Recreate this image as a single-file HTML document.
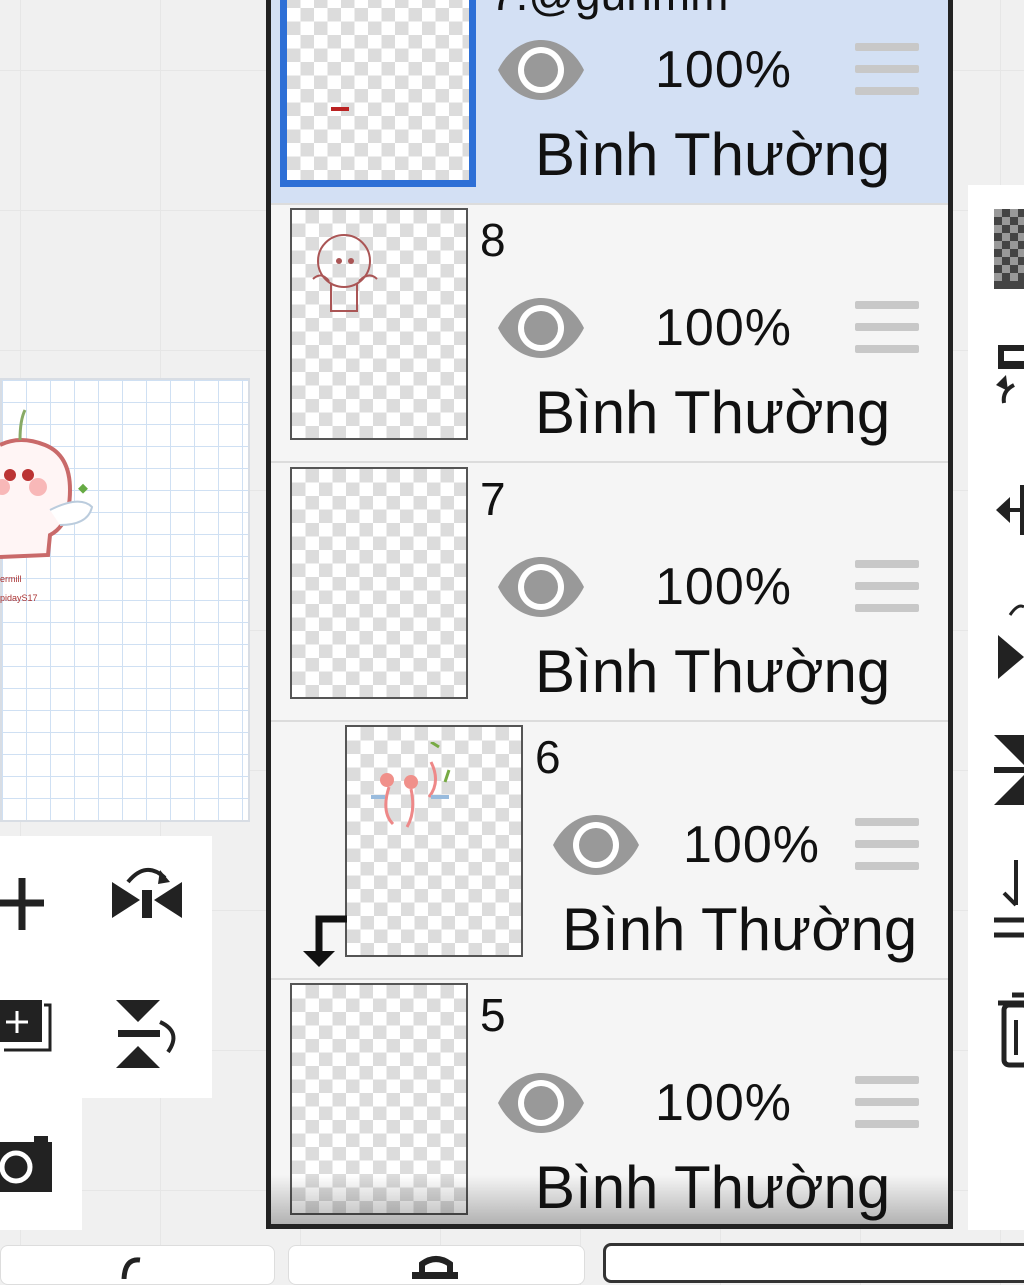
<!DOCTYPE html>
<html><head><meta charset="utf-8"><style>
*{margin:0;padding:0;box-sizing:border-box}
body{width:1024px;height:1279px;overflow:hidden;background:#f0f0f0;position:relative;font-family:"Liberation Sans","DejaVu Sans",sans-serif;
background-image:linear-gradient(#e6e6e6 1px,transparent 1px),linear-gradient(90deg,#e6e6e6 1px,transparent 1px);background-size:140px 140px;background-position:20px 70px}
.abs{position:absolute}
.panel{left:266px;top:-10px;width:687px;height:1239px;border:5px solid #222;background:#f5f5f5;overflow:hidden}
.row{position:absolute;left:0;width:677px;height:258px;border-bottom:2px solid #dcdcdc}
.chk{position:absolute;border:2px solid #555;background-color:#fff;
background-image:conic-gradient(#dcdcdc 25%,transparent 0 50%,#dcdcdc 0 75%,transparent 0);background-size:27px 27px}
.name{position:absolute;font-size:46px;color:#111}
.eye{position:absolute;width:90px;height:64px}
.pct{position:absolute;font-size:52px;color:#111;letter-spacing:1px}
.ham{position:absolute;width:64px}
.ham i{display:block;height:8px;background:#c8c8c8;margin-bottom:14px;border-radius:2px}
.mode{position:absolute;font-size:60px;color:#111}
</style></head><body>

<div class="abs" style="left:0;top:378px;width:250px;height:444px;background:#fff;border:2px solid #d8dde4;
background-image:linear-gradient(#cfe0f3 1px,transparent 1px),linear-gradient(90deg,#cfe0f3 1px,transparent 1px);background-size:24px 22px"></div>
<svg class="abs" style="left:0;top:395px" width="100" height="215">
<path d="M0 50 Q20 40 45 50 Q70 60 70 95 Q70 130 50 140 L48 160 L0 162" fill="#fff5f5" stroke="#c96a6a" stroke-width="4"/>
<circle cx="10" cy="80" r="6" fill="#b33"/><circle cx="28" cy="80" r="6" fill="#b33"/>
<circle cx="38" cy="92" r="9" fill="#f8b8b8"/><circle cx="2" cy="92" r="8" fill="#f8b8b8"/>
<path d="M50 115 Q80 100 92 112 Q88 130 60 130" fill="#fff" stroke="#bcd" stroke-width="2"/>
<path d="M20 45 Q20 25 25 15" stroke="#8a6" stroke-width="3" fill="none"/>
<rect x="80" y="90" width="7" height="7" fill="#6a4" transform="rotate(45 83 93)"/>
<text x="0" y="187" font-size="9" fill="#a33" font-family="Liberation Sans">ermill</text>
<text x="0" y="206" font-size="9" fill="#a33" font-family="Liberation Sans">pidayS17</text>
</svg>

<div class="abs" style="left:0;top:836px;width:212px;height:262px;background:#fff"></div>
<div class="abs" style="left:0;top:1098px;width:82px;height:132px;background:#fff"></div>
<svg class="abs" style="left:0;top:860px" width="212" height="370">
<path d="M22 18 V70 M0 43 H44" stroke="#222" stroke-width="7"/>
<path d="M112 22 L140 40 L112 58Z M182 22 L154 40 L182 58Z" fill="#222"/><rect x="142" y="30" width="10" height="28" fill="#222"/>
<path d="M128 22 Q146 0 165 18" stroke="#222" stroke-width="4" fill="none"/><path d="M160 10 L170 22 L158 24Z" fill="#222"/>
<rect x="0" y="140" width="42" height="42" fill="#222"/><path d="M44 145 H50 V190 H4" stroke="#222" stroke-width="3" fill="none"/>
<path d="M6 162 H28 M17 151 V173" stroke="#fff" stroke-width="3"/>
<path d="M116 140 H160 L138 162Z M116 208 H160 L138 186Z" fill="#222"/><rect x="118" y="170" width="42" height="7" fill="#222"/>
<path d="M160 162 Q182 172 168 192" stroke="#222" stroke-width="4" fill="none"/>
<rect x="0" y="282" width="52" height="50" fill="#222"/><rect x="34" y="276" width="14" height="8" fill="#222"/>
<circle cx="16" cy="307" r="14" fill="none" stroke="#fff" stroke-width="5"/>
</svg>

<div class="abs" style="left:968px;top:185px;width:56px;height:1045px;background:#fff"></div>
<svg class="abs" style="left:990px;top:205px" width="34" height="880">
<rect x="4" y="4" width="30" height="80" fill="#444"/>
<path d="M4 4h8v8H4zM20 4h8v8h-8zM12 12h8v8h-8zM28 12h6v8h-6zM4 20h8v8H4zM20 20h8v8h-8zM12 28h8v8h-8zM28 28h6v8h-6zM4 36h8v8H4zM20 36h8v8h-8zM12 44h8v8h-8zM28 44h6v8h-6zM4 52h8v8H4zM20 52h8v8h-8zM12 60h8v8h-8zM28 60h6v8h-6zM4 68h8v8H4zM20 68h8v8h-8z" fill="#999"/>
<rect x="8" y="140" width="26" height="24" fill="#222"/><rect x="14" y="146" width="20" height="10" fill="#fff"/>
<path d="M24 180 Q12 186 14 198" stroke="#222" stroke-width="4" fill="none"/><path d="M6 180 L16 170 L18 186Z" fill="#222"/>
<path d="M6 305 L20 292 V318Z" fill="#222"/><path d="M18 305 H34 M32 280 V330" stroke="#222" stroke-width="4"/>
<path d="M8 430 L34 452 L8 474Z" fill="#222"/><path d="M20 410 Q28 398 34 402" stroke="#222" stroke-width="3" fill="none"/>
<path d="M4 530 H34 V560Z M4 600 H34 V570Z" fill="#222"/><rect x="4" y="562" width="30" height="6" fill="#222"/>
<path d="M26 655 V700 M14 688 L26 700" stroke="#222" stroke-width="4"/><path d="M4 715 H34 M4 730 H34" stroke="#222" stroke-width="5"/>
<rect x="14" y="800" width="24" height="60" rx="5" fill="none" stroke="#222" stroke-width="5"/><path d="M8 798 H34 M22 790 H34" stroke="#222" stroke-width="5"/><path d="M26 815 V850" stroke="#222" stroke-width="4"/>
</svg>

<div class="abs" style="left:0;top:1245px;width:275px;height:40px;background:#fff;border:1px solid #ddd;border-radius:8px"></div>
<div class="abs" style="left:288px;top:1245px;width:297px;height:40px;background:#fff;border:1px solid #ddd;border-radius:8px"></div>
<div class="abs" style="left:603px;top:1243px;width:430px;height:40px;background:#fff;border:3px solid #333;border-radius:8px"></div>
<svg class="abs" style="left:110px;top:1250px" width="360" height="29">
<path d="M30 10 Q15 8 14 29" stroke="#222" stroke-width="5" fill="none"/>
<path d="M312 22 V14 Q326 4 340 14 V22" stroke="#222" stroke-width="6" fill="none"/><rect x="302" y="22" width="46" height="10" fill="#222"/>
</svg>

<div class="abs panel">
 <div class="row" style="top:-48px;background:#d3e0f4">
  <div class="chk" style="left:9px;top:0;width:196px;height:240px;border:7px solid #2d6fd6"></div>
  <div class="abs" style="left:60px;top:160px;width:18px;height:4px;background:#b22"></div>
  <div class="name" style="left:219px;top:20px">7.@gunmm</div>
 </div>
 <div class="row" style="top:210px">
  <div class="chk" style="left:19px;top:3px;width:178px;height:232px"></div>
  <svg class="abs" style="left:28px;top:18px" width="90" height="90"><circle cx="45" cy="38" r="26" fill="none" stroke="#a55" stroke-width="2"/><path d="M32 60 V88 H58 V60 M14 56 Q22 48 30 58 M60 58 Q70 48 78 56" stroke="#a55" stroke-width="2" fill="none"/><circle cx="40" cy="38" r="3" fill="#a55"/><circle cx="52" cy="38" r="3" fill="#a55"/></svg>
  <div class="name" style="left:209px;top:8px">8</div>
 </div>
 <div class="row" style="top:469px">
  <div class="chk" style="left:19px;top:3px;width:178px;height:232px"></div>
  <div class="name" style="left:209px;top:8px">7</div>
 </div>
 <div class="row" style="top:727px">
  <div class="chk" style="left:74px;top:3px;width:178px;height:232px"></div>
  <svg class="abs" style="left:100px;top:20px" width="90" height="100"><circle cx="16" cy="38" r="7" fill="#f0908a"/><circle cx="40" cy="40" r="7" fill="#f0908a"/><path d="M18 45 Q10 70 22 82 M40 47 Q45 70 36 85 M60 20 Q70 40 58 55" stroke="#e88" stroke-width="3" fill="none"/><path d="M0 55 H14 M60 55 H78" stroke="#9bd" stroke-width="4"/><path d="M60 0 L68 5 M78 28 L74 40" stroke="#7a4" stroke-width="3"/></svg>
  <div class="name" style="left:264px;top:8px">6</div>
  <svg class="abs" style="left:28px;top:185px" width="50" height="62"><path d="M48 12 H20 V48" stroke="#111" stroke-width="7" fill="none"/><path d="M4 44 H36 L20 60Z" fill="#111"/></svg>
 </div>
 <div class="row" style="top:985px;border-bottom:none">
  <div class="chk" style="left:19px;top:3px;width:178px;height:232px"></div>
  <div class="name" style="left:209px;top:8px">5</div>
 </div>
 <div class="abs" style="left:0;top:1180px;width:677px;height:50px;background:linear-gradient(rgba(0,0,0,0),rgba(0,0,0,0.28))"></div>
</div>

<svg width="0" height="0" style="position:absolute"><defs><g id="eye"><path d="M2 32 C22 -8 68 -8 88 32 C68 72 22 72 2 32Z" fill="#999"/><circle cx="45" cy="32" r="23" fill="#fff"/><circle cx="45" cy="32" r="17" fill="#999"/></g></defs></svg>

<svg class="eye" style="left:496px;top:38px" viewBox="0 0 90 64"><use href="#eye"/></svg>
<div class="pct" style="left:655px;top:40px">100%</div>
<div class="ham" style="left:855px;top:43px"><i></i><i></i><i></i></div>
<div class="mode" style="left:535px;top:120px">Bình Thường</div>

<svg class="eye" style="left:496px;top:296px" viewBox="0 0 90 64"><use href="#eye"/></svg>
<div class="pct" style="left:655px;top:298px">100%</div>
<div class="ham" style="left:855px;top:301px"><i></i><i></i><i></i></div>
<div class="mode" style="left:535px;top:378px">Bình Thường</div>

<svg class="eye" style="left:496px;top:555px" viewBox="0 0 90 64"><use href="#eye"/></svg>
<div class="pct" style="left:655px;top:557px">100%</div>
<div class="ham" style="left:855px;top:560px"><i></i><i></i><i></i></div>
<div class="mode" style="left:535px;top:637px">Bình Thường</div>

<svg class="eye" style="left:551px;top:813px" viewBox="0 0 90 64"><use href="#eye"/></svg>
<div class="pct" style="left:683px;top:815px">100%</div>
<div class="ham" style="left:855px;top:818px"><i></i><i></i><i></i></div>
<div class="mode" style="left:562px;top:895px">Bình Thường</div>

<svg class="eye" style="left:496px;top:1071px" viewBox="0 0 90 64"><use href="#eye"/></svg>
<div class="pct" style="left:655px;top:1073px">100%</div>
<div class="ham" style="left:855px;top:1076px"><i></i><i></i><i></i></div>
<div class="mode" style="left:535px;top:1153px">Bình Thường</div>
</body></html>
